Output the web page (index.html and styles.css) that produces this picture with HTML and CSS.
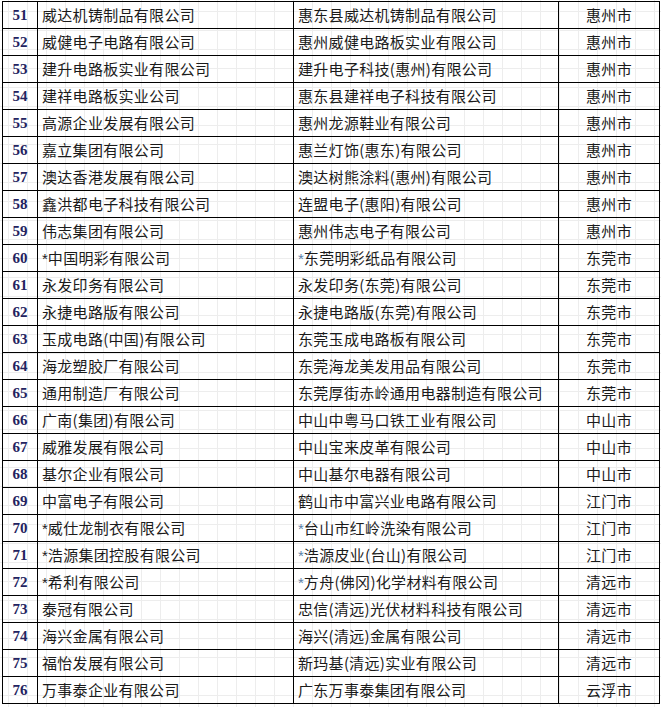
FILE: index.html
```html
<!DOCTYPE html>
<html lang="zh-CN">
<head>
<meta charset="utf-8">
<title>企业名单</title>
<link rel="stylesheet" href="styles.css">
</head>
<body>
<table class="list">
<colgroup><col class="c-no"><col class="c-hk"><col class="c-gd"><col class="c-city"></colgroup>
<tbody>
<tr><td class="no">51</td><td>威达机铸制品有限公司</td><td>惠东县威达机铸制品有限公司</td><td class="city">惠州市</td></tr>
<tr><td class="no">52</td><td>威健电子电路有限公司</td><td>惠州威健电路板实业有限公司</td><td class="city">惠州市</td></tr>
<tr><td class="no">53</td><td>建升电路板实业有限公司</td><td>建升电子科技(惠州)有限公司</td><td class="city">惠州市</td></tr>
<tr><td class="no">54</td><td>建祥电路板实业公司</td><td>惠东县建祥电子科技有限公司</td><td class="city">惠州市</td></tr>
<tr><td class="no">55</td><td>高源企业发展有限公司</td><td>惠州龙源鞋业有限公司</td><td class="city">惠州市</td></tr>
<tr><td class="no">56</td><td>嘉立集团有限公司</td><td>惠兰灯饰(惠东)有限公司</td><td class="city">惠州市</td></tr>
<tr><td class="no">57</td><td>澳达香港发展有限公司</td><td>澳达树熊涂料(惠州)有限公司</td><td class="city">惠州市</td></tr>
<tr><td class="no">58</td><td>鑫洪都电子科技有限公司</td><td>连盟电子(惠阳)有限公司</td><td class="city">惠州市</td></tr>
<tr><td class="no">59</td><td>伟志集团有限公司</td><td>惠州伟志电子有限公司</td><td class="city">惠州市</td></tr>
<tr><td class="no">60</td><td><span class="star">*</span>中国明彩有限公司</td><td><span class="star blue">*</span>东莞明彩纸品有限公司</td><td class="city">东莞市</td></tr>
<tr><td class="no">61</td><td>永发印务有限公司</td><td>永发印务(东莞)有限公司</td><td class="city">东莞市</td></tr>
<tr><td class="no">62</td><td>永捷电路版有限公司</td><td>永捷电路版(东莞)有限公司</td><td class="city">东莞市</td></tr>
<tr><td class="no">63</td><td>玉成电路(中国)有限公司</td><td>东莞玉成电路板有限公司</td><td class="city">东莞市</td></tr>
<tr><td class="no">64</td><td>海龙塑胶厂有限公司</td><td>东莞海龙美发用品有限公司</td><td class="city">东莞市</td></tr>
<tr><td class="no">65</td><td>通用制造厂有限公司</td><td>东莞厚街赤岭通用电器制造有限公司</td><td class="city">东莞市</td></tr>
<tr><td class="no">66</td><td>广南(集团)有限公司</td><td>中山中粤马口铁工业有限公司</td><td class="city">中山市</td></tr>
<tr><td class="no">67</td><td>威雅发展有限公司</td><td>中山宝来皮革有限公司</td><td class="city">中山市</td></tr>
<tr><td class="no">68</td><td>基尔企业有限公司</td><td>中山基尔电器有限公司</td><td class="city">中山市</td></tr>
<tr><td class="no">69</td><td>中富电子有限公司</td><td>鹤山市中富兴业电路有限公司</td><td class="city">江门市</td></tr>
<tr><td class="no">70</td><td><span class="star">*</span>威仕龙制衣有限公司</td><td><span class="star blue">*</span>台山市红岭洗染有限公司</td><td class="city">江门市</td></tr>
<tr><td class="no">71</td><td><span class="star">*</span>浩源集团控股有限公司</td><td><span class="star blue">*</span>浩源皮业(台山)有限公司</td><td class="city">江门市</td></tr>
<tr><td class="no">72</td><td><span class="star">*</span>希利有限公司</td><td><span class="star blue">*</span>方舟(佛冈)化学材料有限公司</td><td class="city">清远市</td></tr>
<tr><td class="no">73</td><td>泰冠有限公司</td><td>忠信(清远)光伏材料科技有限公司</td><td class="city">清远市</td></tr>
<tr><td class="no">74</td><td>海兴金属有限公司</td><td>海兴(清远)金属有限公司</td><td class="city">清远市</td></tr>
<tr><td class="no">75</td><td>福怡发展有限公司</td><td>新玛基(清远)实业有限公司</td><td class="city">清远市</td></tr>
<tr><td class="no">76</td><td>万事泰企业有限公司</td><td>广东万事泰集团有限公司</td><td class="city">云浮市</td></tr>
</tbody>
</table>
</body>
</html>
```
FILE: styles.css
```css
html, body {
  margin: 0;
  padding: 0;
}
body {
  background-color: #ffffff;
  background-image:
    linear-gradient(to right, #ededed 1px, transparent 1px),
    linear-gradient(to bottom, #ededed 1px, transparent 1px);
  background-size: 19px 19px;
  background-position: 8px 11px;
  min-height: 707px;
  padding: 1px 0 0 2px;
  box-sizing: border-box;
  font-family: "Noto Sans CJK SC", "Noto Sans", sans-serif;
  color: #1a1a1a;
}
.list {
  border-collapse: collapse;
  table-layout: fixed;
  width: 657px;
}
.c-no { width: 35px; }
.c-hk { width: 256px; }
.c-gd { width: 265px; }
.c-city { width: 101px; }
.list tr {
  height: 27px;
}
.list td {
  border: 1px solid #000;
  height: 26px;
  padding: 0 0 0 4px;
  font-size: 15px;
  line-height: 18px;
  letter-spacing: 0.3px;
  white-space: nowrap;
  vertical-align: middle;
  overflow: hidden;
}
.list td.no {
  padding: 0;
  text-align: center;
  font-family: "Liberation Serif", "Times New Roman", serif;
  font-weight: bold;
  font-size: 15px;
  letter-spacing: 0;
  color: #232360;
}
.list td.city {
  padding: 0;
  text-align: center;
}
.star {
  font-family: "Liberation Sans", sans-serif;
  letter-spacing: 0;
}
.star.blue {
  color: #5b7fa8;
}
```
